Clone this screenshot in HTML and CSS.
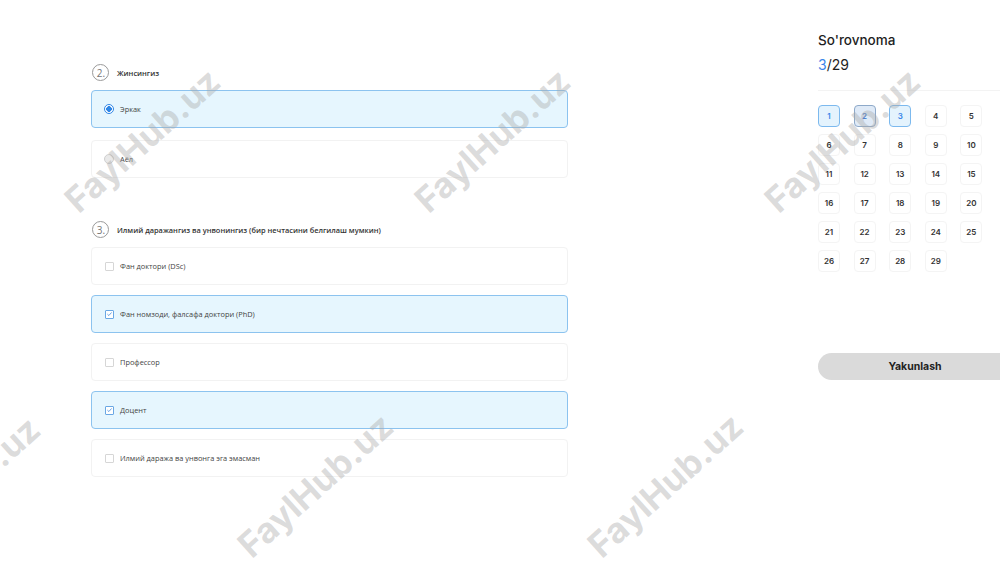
FILE: index.html
```html
<!DOCTYPE html>
<html lang="uz">
<head>
<meta charset="utf-8">
<title>So'rovnoma</title>
<link rel="stylesheet" href="styles.css">
</head>
<body>
<div class="page">
  <main class="survey">
    <section class="question">
      <div class="q-head"><span class="q-num">2.</span><span class="q-title">Жинсингиз</span></div>
      <div class="options">
        <div class="option selected"><span class="radio on"></span><span>Эркак</span></div>
        <div class="option"><span class="radio"></span><span>Аёл</span></div>
      </div>
    </section>
    <section class="question q3">
      <div class="q-head"><span class="q-num">3.</span><span class="q-title">Илмий даражангиз ва унвонингиз (бир нечтасини белгилаш мумкин)</span></div>
      <div class="options">
        <div class="option"><span class="check"></span><span>Фан доктори (DSc)</span></div>
        <div class="option selected"><span class="check on"><svg viewBox="0 0 10 10" width="8" height="8"><path d="M2 5.2 L4.1 7.2 L8 2.8" fill="none" stroke="#3a84d8" stroke-width="1.1"/></svg></span><span>Фан номзоди, фалсафа доктори (PhD)</span></div>
        <div class="option"><span class="check"></span><span>Профессор</span></div>
        <div class="option selected"><span class="check on"><svg viewBox="0 0 10 10" width="8" height="8"><path d="M2 5.2 L4.1 7.2 L8 2.8" fill="none" stroke="#3a84d8" stroke-width="1.1"/></svg></span><span>Доцент</span></div>
        <div class="option"><span class="check"></span><span>Илмий даража ва унвонга эга эмасман</span></div>
      </div>
    </section>
  </main>
  <aside class="panel">
    <h2 class="panel-title">So'rovnoma</h2>
    <div class="counter"><span class="current">3</span>/29</div>
    <div class="divider"></div>
    <div class="grid">
      <span class="cell done">1</span>
      <span class="cell active">2</span>
      <span class="cell done">3</span>
      <span class="cell">4</span>
      <span class="cell">5</span>
      <span class="cell">6</span>
      <span class="cell">7</span>
      <span class="cell">8</span>
      <span class="cell">9</span>
      <span class="cell">10</span>
      <span class="cell">11</span>
      <span class="cell">12</span>
      <span class="cell">13</span>
      <span class="cell">14</span>
      <span class="cell">15</span>
      <span class="cell">16</span>
      <span class="cell">17</span>
      <span class="cell">18</span>
      <span class="cell">19</span>
      <span class="cell">20</span>
      <span class="cell">21</span>
      <span class="cell">22</span>
      <span class="cell">23</span>
      <span class="cell">24</span>
      <span class="cell">25</span>
      <span class="cell">26</span>
      <span class="cell">27</span>
      <span class="cell">28</span>
      <span class="cell">29</span>
    </div>
    <button class="finish">Yakunlash</button>
  </aside>
</div>
<div class="watermarks" aria-hidden="true">
  <span class="wm wm1">FaylHub.uz</span>
  <span class="wm wm2">FaylHub.uz</span>
  <span class="wm wm3">FaylHub.uz</span>
  <span class="wm wm4">FaylHub.uz</span>
  <span class="wm wm5">FaylHub.uz</span>
  <span class="wm wm6">FaylHub.uz</span>
</div>
</body>
</html>
```

FILE: styles.css
```css
* { box-sizing: border-box; }

html, body {
  margin: 0;
  padding: 0;
  width: 1000px;
  height: 562px;
  overflow: hidden;
  background: #ffffff;
}

body {
  font-family: "Open Sans", "Noto Sans", sans-serif;
  color: #333;
  position: relative;
}

.page {
  display: flex;
  align-items: flex-start;
  padding-left: 91px;
  width: 1000px;
  overflow: hidden;
}

.survey {
  flex: 0 0 477px;
  padding-top: 64px;
  margin-right: 250px;
}

.q3 { margin-top: 43px; }

.q-head {
  display: flex;
  align-items: center;
  height: 17px;
  padding-left: 1px;
}

.q-num {
  width: 17px;
  height: 17px;
  border: 1px solid #9a9a9a;
  border-radius: 50%;
  display: flex;
  align-items: center;
  justify-content: center;
  font-size: 10px;
  color: #777;
  padding-left: 1px;
}

.q-title {
  margin-left: 8px;
  font-size: 7.4px;
  font-weight: 600;
  color: #333;
}

.options {
  margin-top: 9px;
  display: flex;
  flex-direction: column;
  gap: 10px;
}

.option {
  height: 38px;
  border: 1px solid #f2f2f2;
  border-radius: 4px;
  display: flex;
  align-items: center;
  padding-left: 12px;
  gap: 6px;
  font-size: 7.4px;
  color: #444;
  background: #fff;
}

.question:first-child .options { gap: 12px; }

.option.selected {
  background: #e6f6fe;
  border-color: #8cc3ef;
}

.radio {
  width: 10px;
  height: 10px;
  border-radius: 50%;
  border: 1px solid #cfcfcf;
  background: #e9e9e9;
  flex: 0 0 auto;
}

.radio.on {
  border: 1.5px solid #2f86e6;
  background: radial-gradient(circle, #2f86e6 0 2.6px, #ffffff 3px);
}

.check {
  width: 9px;
  height: 9px;
  border: 1px solid #d6d6d6;
  border-radius: 1px;
  background: #fff;
  display: flex;
  align-items: center;
  justify-content: center;
  margin-left: 1px;
  flex: 0 0 auto;
}

.check.on {
  border-color: #6aa7e4;
}

/* Right panel */
.panel {
  flex: 0 0 194px;
  padding-top: 30px;
  font-family: "Inter", "Lato", sans-serif;
}

.panel-title {
  margin: 0;
  font-size: 13.5px;
  font-weight: 500;
  color: #1e1e1e;
  line-height: 20px;
}

.counter {
  margin-top: 5px;
  font-size: 14px;
  line-height: 20px;
  color: #1e1e1e;
}

.counter .current { color: #3a86e8; }

.divider {
  margin-top: 15px;
  height: 1px;
  background: #f3f3f3;
  width: 182px;
}

.grid {
  margin-top: 14px;
  display: grid;
  grid-template-columns: repeat(5, 22px);
  column-gap: 13.6px;
  row-gap: 7px;
}

.cell {
  width: 22px;
  height: 22px;
  border: 1px solid #f4f4f4;
  border-radius: 4px;
  display: flex;
  align-items: center;
  justify-content: center;
  font-size: 8px;
  font-weight: 600;
  color: #333;
}

.cell.done {
  background: #e4f3fd;
  border-color: #7cb9ee;
  color: #3a86e8;
}

.cell.active {
  background: #dfeaf7;
  border-color: #8ea9c9;
  color: #3a74c8;
}

.finish {
  margin-top: 81px;
  width: 194px;
  height: 27px;
  border: none;
  border-radius: 14px;
  background: #dadada;
  font-family: "Inter", "Lato", sans-serif;
  font-size: 10.5px;
  font-weight: 700;
  color: #222;
  display: block;
}

/* Watermarks overlaid on the screenshot */
.watermarks {
  position: absolute;
  inset: 0;
  pointer-events: none;
  overflow: hidden;
}

.wm {
  position: absolute;
  width: 260px;
  margin-left: -130px;
  margin-top: -22px;
  text-align: center;
  font-family: "Inter", "DejaVu Sans", sans-serif;
  font-weight: 700;
  font-size: 35px;
  line-height: 44px;
  color: rgba(170, 170, 170, 0.42);
  transform: rotate(-42deg);
  white-space: nowrap;
}

.wm1 { left: 142px; top: 140px; }
.wm2 { left: 492px; top: 140px; }
.wm3 { left: 842px; top: 140px; }
.wm4 { left: -38px; top: 488px; }
.wm5 { left: 315px; top: 485px; }
.wm6 { left: 665px; top: 485px; }
```
